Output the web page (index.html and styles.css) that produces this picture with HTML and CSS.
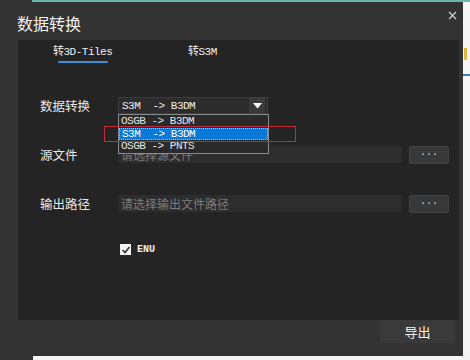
FILE: index.html
```html
<!DOCTYPE html>
<html lang="zh">
<head>
    <meta charset="UTF-8">
    <title>数据转换</title>
    <link rel="stylesheet" href="styles.css">
</head>
<body>
    <div class="topstrip"><div class="dk"></div><div class="teal"></div></div>
    <div class="screen">
        <div class="dialog">
            <div class="titlebar">
                <span class="title">数据转换</span>
                <svg class="close" width="9" height="9" viewBox="0 0 9 9">
                    <path d="M1 1 L8 8 M8 1 L1 8" stroke="#d8d8d8" stroke-width="1.1"/>
                </svg>
            </div>
            <div class="panel">
                <div class="tabs">
                    <div class="tab active">转3D-Tiles</div>
                    <div class="tab">转S3M</div>
                </div>
                <div class="form">
                    <div class="row r1">
                        <span class="label">数据转换</span>
                        <div class="combo">
                            <span class="combo-text">S3M&nbsp;&nbsp;-&gt; B3DM</span>
                            <span class="arrow"><svg width="9" height="6" viewBox="0 0 9 6"><path d="M0 0 H9 L4.5 5.5 Z" fill="#fff"/></svg></span>
                            <ul class="list">
                                <li>OSGB -&gt; B3DM</li>
                                <li class="sel">S3M&nbsp;&nbsp;-&gt; B3DM</li>
                                <li>OSGB -&gt; PNTS</li>
                            </ul>
                        </div>
                        <div class="mark"></div>
                    </div>
                    <div class="row r2">
                        <span class="label">源文件</span>
                        <div class="input">请选择源文件</div>
                        <div class="btn-more">...</div>
                    </div>
                    <div class="row r3">
                        <span class="label">输出路径</span>
                        <div class="input">请选择输出文件路径</div>
                        <div class="btn-more">...</div>
                    </div>
                    <div class="check-row">
                        <span class="box"><svg width="10" height="10" viewBox="0 0 10 10"><path d="M1.5 5 L4 7.5 L8.5 2" stroke="#333" stroke-width="1.6" fill="none"/></svg></span>
                        <span class="check-label">ENU</span>
                    </div>
                </div>
            </div>
            <div class="footer">
                <button class="export">导出</button>
            </div>
        </div>
        <div class="side">
            <div class="side-yellow"></div>
            <div class="side-blue"></div>
        </div>
    </div>
    <div class="bottomstrip"><div class="dk"></div></div>
</body>
</html>
```

FILE: styles.css
```css
* {
    box-sizing: border-box;
    margin: 0;
    padding: 0;
}
body {
    width: 470px;
    height: 360px;
    overflow: hidden;
    background-color: #f4f4f4;
    font-family: "Noto Sans CJK SC", sans-serif;
    color: #e6e6e6;
}
.topstrip, .bottomstrip {
    display: flex;
}
.topstrip {
    height: 2px;
}
.topstrip .dk {
    width: 32px;
    background-color: #333;
}
.topstrip .teal {
    flex: 1;
    background-color: #63b8aa;
}
.bottomstrip {
    height: 4px;
}
.bottomstrip .dk {
    width: 33px;
    background-color: #333;
}
.screen {
    display: flex;
    height: 354px;
}
.dialog {
    width: 463px;
    background-color: #333;
    display: flex;
    flex-direction: column;
}
.side {
    flex: 1;
    background-color: #f6f6f6;
    padding-top: 46px;
}
.side-yellow {
    width: 3px;
    height: 12px;
    margin-left: 1px;
    background-color: #e0b840;
}
.side-blue {
    width: 7px;
    height: 2px;
    margin-top: 14px;
    background-color: #3b7cc4;
}
.titlebar {
    height: 38px;
    display: flex;
    align-items: center;
    justify-content: space-between;
    padding: 4px 6px 0 17px;
}
.title {
    font-size: 16px;
    color: #f2f2f2;
}
.close {
    margin-top: -16px;
}
.panel {
    height: 280px;
    margin: 0 4px 0 18px;
    background-color: #242424;
}
.tabs {
    display: flex;
    height: 25px;
    padding-left: 35px;
    padding-top: 3px;
    font-family: "Liberation Mono", "Noto Sans CJK SC", monospace;
    font-size: 11px;
    letter-spacing: -0.5px;
    color: #f0f0f0;
}
.tab {
    width: 135px;
    height: 20px;
    line-height: 18px;
}
.tab.active {
    position: relative;
}
.tab.active::after {
    content: "";
    position: absolute;
    left: 5px;
    top: 18px;
    width: 50px;
    height: 2px;
    background-color: #3d8fd6;
    border-radius: 1px;
}
.form {
    padding-left: 22px;
    padding-top: 32px;
}
.row {
    display: flex;
    align-items: center;
    height: 17px;
    position: relative;
}
.r2 {
    margin-top: 32px;
}
.r3 {
    margin-top: 32px;
}
.label {
    width: 78px;
    font-size: 12.5px;
    color: #e8e8e8;
}
.combo {
    position: relative;
    width: 150px;
    height: 17px;
    background-color: #2c2c2c;
    border: 1px solid #3c3c3c;
    display: flex;
    align-items: center;
    justify-content: space-between;
    font-family: "Liberation Mono", monospace;
    font-size: 11px;
    letter-spacing: -0.5px;
    color: #f0f0f0;
}
.combo-text {
    padding-left: 3px;
}
.arrow {
    width: 16px;
    height: 15px;
    margin-right: 2px;
    background-color: #3a3a3a;
    display: flex;
    align-items: center;
    justify-content: center;
}
.list {
    position: absolute;
    left: -1px;
    top: 16px;
    width: 151px;
    list-style: none;
    background-color: #2a2a2a;
    border: 1px solid #8a8a8a;
    z-index: 2;
}
.list li {
    height: 12.5px;
    line-height: 12px;
    padding-left: 2px;
    color: #e6e6e6;
}
.list li.sel {
    background-color: #0a78d7;
    border: 1px dotted #9cc8f0;
    color: #fff;
    line-height: 10px;
}
.mark {
    position: absolute;
    left: 64px;
    top: 29px;
    width: 192px;
    height: 16px;
    border: 1px solid #c42a33;
    z-index: 3;
}
.input {
    width: 284px;
    height: 17px;
    background-color: #2d2d2d;
    font-size: 12px;
    line-height: 17px;
    padding-left: 3px;
    color: #7c7c7c;
}
.btn-more {
    width: 40px;
    height: 18px;
    margin-left: 7px;
    background-color: #393939;
    border: 1px solid #444;
    border-radius: 2px;
    font-family: "Liberation Mono", monospace;
    font-size: 10px;
    line-height: 12px;
    text-align: center;
    color: #ddd;
}
.check-row {
    display: flex;
    align-items: center;
    margin-top: 32px;
    margin-left: 80px;
}
.box {
    width: 11px;
    height: 11px;
    background-color: #f4f4f4;
    display: flex;
    align-items: center;
    justify-content: center;
}
.check-label {
    margin-left: 6px;
    font-family: "Liberation Mono", monospace;
    font-size: 10px;
    font-weight: bold;
    color: #f0f0f0;
}
.footer {
    display: flex;
    justify-content: flex-end;
    padding-right: 8px;
}
.export {
    width: 75px;
    height: 23px;
    background-color: #3a3a3a;
    border: none;
    border-radius: 2px;
    font-family: "Noto Sans CJK SC", sans-serif;
    font-size: 13px;
    color: #f4f4f4;
}
```
